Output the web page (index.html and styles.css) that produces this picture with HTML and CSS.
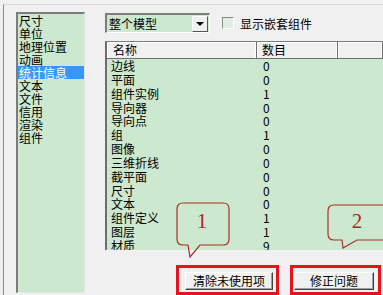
FILE: index.html
```
<!DOCTYPE html>
<html>
	<head>
		<meta charset="utf-8" />
		<title>模型信息</title>
		<link rel="stylesheet" href="styles.css">
	</head>
	<body>
		<div class="frame">
			<ul class="nav">
				<li>尺寸</li>
				<li>单位</li>
				<li>地理位置</li>
				<li>动画</li>
				<li class="current">统计信息</li>
				<li>文本</li>
				<li>文件</li>
				<li>信用</li>
				<li>渲染</li>
				<li>组件</li>
			</ul>
			<div class="main">
				<div class="toolbar">
					<div class="combo">
						<span class="combo-text">整个模型</span>
						<span class="combo-btn"><i class="arrow"></i></span>
					</div>
					<label class="check"><span class="box"></span>显示嵌套组件</label>
				</div>
				<div class="grid">
					<div class="row head">
						<span>名称</span><span>数目</span><span></span>
					</div>
					<div class="row"><span>边线</span><span>0</span></div>
					<div class="row"><span>平面</span><span>0</span></div>
					<div class="row"><span>组件实例</span><span>1</span></div>
					<div class="row"><span>导向器</span><span>0</span></div>
					<div class="row"><span>导向点</span><span>0</span></div>
					<div class="row"><span>组</span><span>1</span></div>
					<div class="row"><span>图像</span><span>0</span></div>
					<div class="row"><span>三维折线</span><span>0</span></div>
					<div class="row"><span>截平面</span><span>0</span></div>
					<div class="row"><span>尺寸</span><span>0</span></div>
					<div class="row"><span>文本</span><span>0</span></div>
					<div class="row"><span>组件定义</span><span>1</span></div>
					<div class="row"><span>图层</span><span>1</span></div>
					<div class="row"><span>材质</span><span>9</span></div>
				</div>
				<div class="actions">
					<div class="mark mark-1"><button class="btn btn-purge">清除未使用项</button></div>
					<div class="mark mark-2"><button class="btn btn-fix">修正问题</button></div>
				</div>
			</div>
		</div>
		<!-- 标注气泡 -->
		<svg class="callout callout-1" width="56" height="58" viewBox="0 0 56 58">
			<path d="M7,1 H47 Q53,1 53,7 V37 Q53,43 47,43 H24 L14,55 L12,43 H7 Q1,43 1,37 V7 Q1,1 7,1 Z" />
			<text x="26" y="26">1</text>
		</svg>
		<svg class="callout callout-2" width="56" height="46" viewBox="0 0 56 46">
			<path d="M7,1 H57 V36 H30 L16,44 L15,36 H7 Q1,36 1,30 V7 Q1,1 7,1 Z" />
			<text x="30" y="24">2</text>
		</svg>
	</body>
</html>
```
FILE: styles.css
```
* {
	padding: 0;
	margin: 0;
	list-style: none;
	box-sizing: border-box;
}

body {
	width: 383px;
	height: 295px;
	overflow: hidden;
	background: #f0f0f0;
	font-family: "Noto Sans CJK SC", "DejaVu Sans", sans-serif;
	font-size: 12px;
	color: #000;
	position: relative;
}

.frame {
	margin: 4px 0 0 3px;
	height: 291px;
	border-top: 1px solid #dadada;
	border-left: 1px solid #8a8a8a;
	padding: 7px 0 0 12px;
	display: flex;
}

.nav {
	width: 69px;
	height: 281px;
	background: #cce8cf;
	border-top: 2px solid #7c7c7c;
	border-left: 2px solid #7c7c7c;
	border-right: 1px solid #e6e6e6;
	border-bottom: 1px solid #e6e6e6;
	line-height: 13px;
	flex-shrink: 0;
}

.nav li {
	padding-left: 1px;
	white-space: nowrap;
}

.nav li.current {
	background: #3399ff;
	color: #fff;
}

.main {
	margin-left: 20px;
	padding-top: 1px;
	flex: 1;
	min-width: 0;
	display: flex;
	flex-direction: column;
}

.toolbar {
	height: 20px;
	display: flex;
	align-items: center;
}

.combo {
	width: 105px;
	height: 20px;
	background: #cce8cf;
	border-top: 2px solid #7c7c7c;
	border-left: 2px solid #7c7c7c;
	border-right: 1px solid #fff;
	border-bottom: 1px solid #fff;
	display: flex;
	align-items: center;
	justify-content: space-between;
	padding-right: 1px;
}

.combo-text {
	padding-left: 2px;
	line-height: 16px;
}

.combo-btn {
	width: 16px;
	height: 16px;
	background: #f0f0f0;
	border-top: 1px solid #fff;
	border-left: 1px solid #fff;
	border-right: 1px solid #555;
	border-bottom: 1px solid #555;
	display: flex;
	align-items: center;
	justify-content: center;
}

.arrow {
	width: 0;
	height: 0;
	border-left: 4px solid transparent;
	border-right: 4px solid transparent;
	border-top: 4px solid #000;
}

.check {
	margin-left: 12px;
	display: flex;
	align-items: center;
}

.box {
	width: 12px;
	height: 12px;
	margin-right: 6px;
	background: #dfeee0;
	border-top: 1px solid #8a8a8a;
	border-left: 1px solid #8a8a8a;
	border-right: 1px solid #fff;
	border-bottom: 1px solid #fff;
}

.grid {
	margin-top: 8px;
	height: 212px;
	background: #cce8cf;
	border-top: 1px solid #7c7c7c;
	border-left: 2px solid #6e6e6e;
	overflow: hidden;
}

.row {
	display: grid;
	grid-template-columns: 150px 81px 1fr;
	height: 13.85px;
	line-height: 13px;
}

.row span {
	padding-left: 4px;
	white-space: nowrap;
}

.row span + span {
	padding-left: 6px;
}

.row.head {
	height: 17px;
	line-height: 15px;
	background: #f0f0f0;
	border-bottom: 1px solid #6e6e6e;
}

.row.head span {
	border-right: 1px solid #6e6e6e;
	box-shadow: inset -1px 0 0 #fff, inset 1px 1px 0 #fff;
	padding-left: 6px;
}

.row.head span + span {
	padding-left: 5px;
}

.actions {
	margin-top: 15px;
	margin-left: 71px;
	display: flex;
	gap: 11px;
}

.mark {
	height: 30px;
	border: 3px solid #e4141c;
	padding: 4px 3px 0 6px;
}

.mark-2 {
	padding: 4px 4px 0 1px;
}

.btn {
	height: 18px;
	font-family: inherit;
	font-size: 12px;
	line-height: 14px;
	background: #f0f0f0;
	border-top: 1px solid #fff;
	border-left: 1px solid #fff;
	border-right: 1px solid #404040;
	border-bottom: 1px solid #404040;
	box-shadow: inset -1px -1px 0 #a0a0a0;
}

.btn-purge {
	width: 88px;
}

.btn-fix {
	width: 80px;
}

.callout {
	position: absolute;
	overflow: visible;
}

.callout path {
	fill: none;
	stroke: #a8302c;
	stroke-width: 1.2;
}

.callout text {
	font-family: "Liberation Serif", serif;
	font-size: 21px;
	fill: #b8201c;
	text-anchor: middle;
}

.callout-1 {
	left: 176px;
	top: 202px;
}

.callout-2 {
	left: 327px;
	top: 204px;
}
```
